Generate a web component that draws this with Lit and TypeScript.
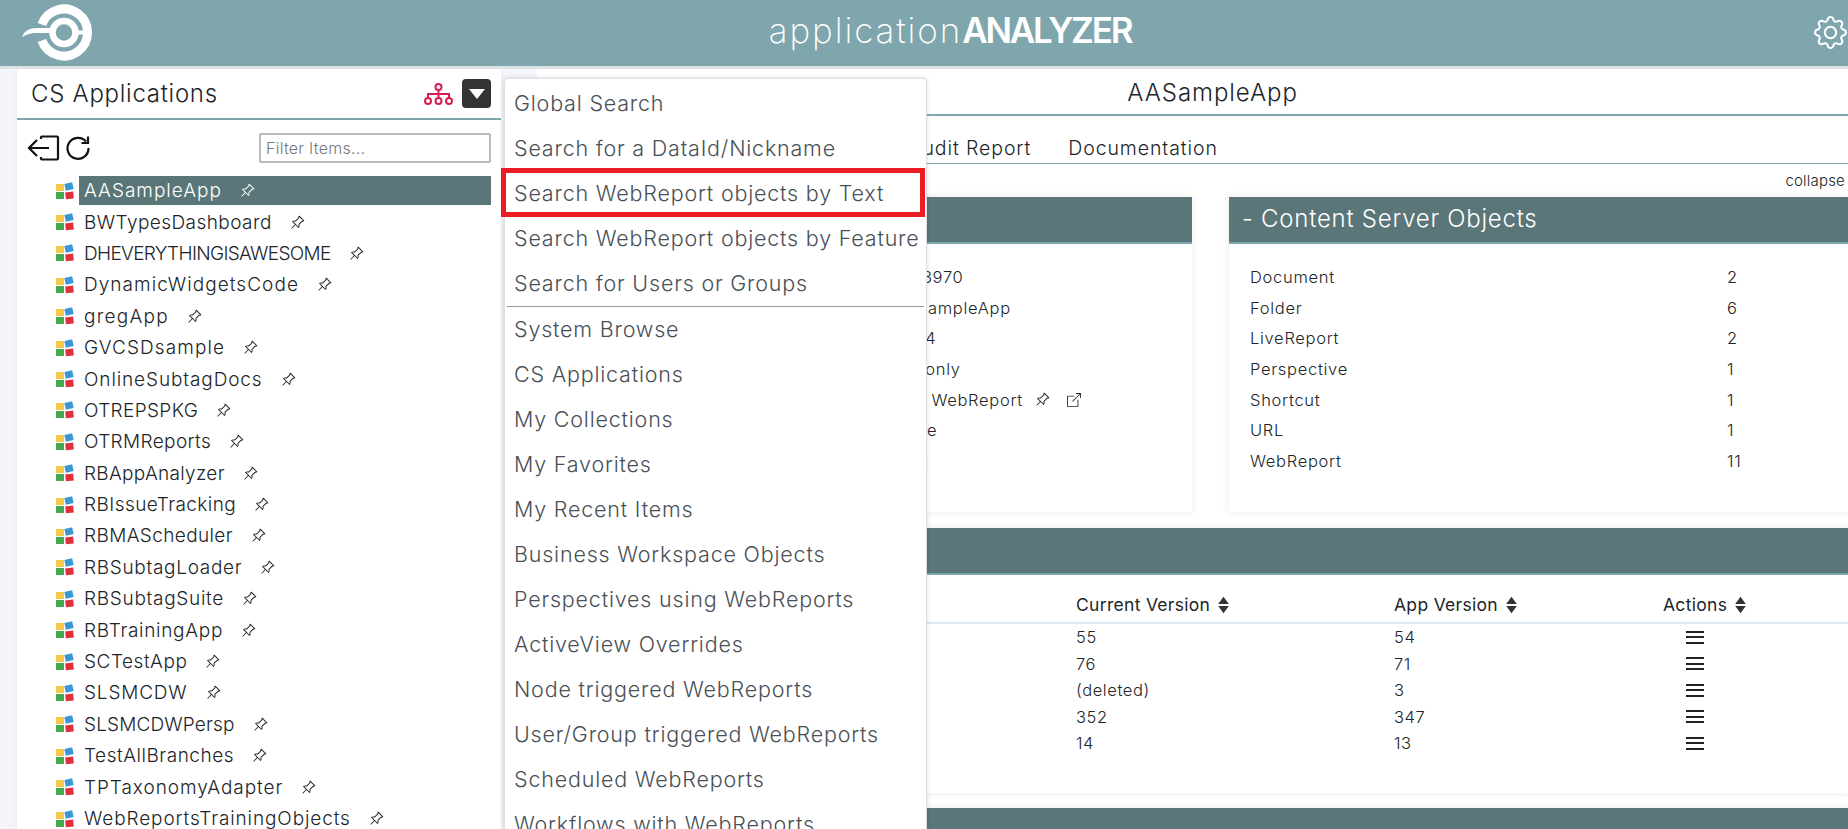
import { LitElement, html, css, svg } from "lit";
import { customElement } from "lit/decorators.js";

const PIN = svg`<path d="M9.828.722a.5.5 0 0 1 .354.146l4.95 4.95a.5.5 0 0 1 0 .707c-.48.48-1.072.588-1.503.588-.177 0-.335-.018-.46-.039l-3.134 3.134a5.927 5.927 0 0 1 .16 1.013c.046.702-.032 1.687-.72 2.375a.5.5 0 0 1-.707 0l-2.829-2.828-3.182 3.182c-.195.195-1.219.902-1.414.707-.195-.195.512-1.22.707-1.414l3.182-3.182-2.828-2.829a.5.5 0 0 1 0-.707c.688-.688 1.673-.767 2.375-.72a5.922 5.922 0 0 1 1.013.16l3.134-3.133a2.772 2.772 0 0 1-.04-.461c0-.43.108-1.022.589-1.503a.5.5 0 0 1 .353-.146zm.122 2.112v-.002.002zm0-.002v.002a.5.5 0 0 1-.122.51L6.293 6.878a.5.5 0 0 1-.511.12H5.78l-.014-.004a4.507 4.507 0 0 0-.288-.076 4.922 4.922 0 0 0-.765-.116c-.422-.028-.836.008-1.175.15l5.51 5.509c.141-.34.177-.753.149-1.175a4.924 4.924 0 0 0-.192-1.054l-.004-.013v-.001a.5.5 0 0 1 .12-.512l3.536-3.535a.5.5 0 0 1 .532-.115l.096.022c.087.017.208.034.344.034.114 0 .23-.011.343-.04L9.927 2.028c-.029.113-.04.23-.04.343a1.779 1.779 0 0 0 .062.46z"/>`;

const pin = () => html`<svg class="pin" viewBox="0 0 16 16" fill="currentColor">${PIN}</svg>`;

const tiles = () => html`<svg class="tiles" viewBox="0 0 18 18">
  <rect x="0" y="2" width="8" height="7" fill="#f6c94a"/>
  <rect x="9" y="1" width="8" height="7" fill="#3b97d3" transform="rotate(-12 13 4.5)"/>
  <rect x="0" y="10" width="8" height="7" fill="#46a84f"/>
  <rect x="9.5" y="10" width="8" height="7" fill="#e0303c" transform="rotate(-6 13 13.5)"/>
</svg>`;

const sortIcon = () => html`<svg class="sort" viewBox="0 0 10 16" fill="currentColor"><path d="M5 .5 9.8 7H.2zM5 15.500.2 9h9.600z"/></svg>`;

// label and the letter spacing that brings its width to the reference's
const TREE: [string, number][] = [
  ["AASampleApp", 1.0], ["BWTypesDashboard", 0.44], ["DHEVERYTHINGISAWESOME", -0.67], ["DynamicWidgetsCode", 1.05],
  ["gregApp", 1.27], ["GVCSDsample", 1.1], ["OnlineSubtagDocs", 0.89], ["OTREPSPKG", 0.37], ["OTRMReports", 0.38],
  ["RBAppAnalyzer", 0.31], ["RBIssueTracking", 0.43], ["RBMAScheduler", 0.38], ["RBSubtagLoader", 0.69],
  ["RBSubtagSuite", 0.7], ["RBTrainingApp", 0.7], ["SCTestApp", 0.53], ["SLSMCDW", 0.83], ["SLSMCDWPersp", 0.16],
  ["TestAllBranches", 0.53], ["TPTaxonomyAdapter", 0.93], ["WebReportsTrainingObjects", 0.89],
];

const MENU_A = ["Global Search", "Search for a DataId/Nickname", "Search WebReport objects by Text", "Search WebReport objects by Feature", "Search for Users or Groups"];
const MENU_B = ["System Browse", "CS Applications", "My Collections", "My Favorites", "My Recent Items", "Business Workspace Objects", "Perspectives using WebReports", "ActiveView Overrides", "Node triggered WebReports", "User/Group triggered WebReports", "Scheduled WebReports", "Workflows with WebReports"];

const OBJECTS: [string, number][] = [["Document", 2], ["Folder", 6], ["LiveReport", 2], ["Perspective", 1], ["Shortcut", 1], ["URL", 1], ["WebReport", 11]];

const VERSIONS: [string, string, string][] = [["Item A", "55", "54"], ["Item B", "76", "71"], ["Item C", "(deleted)", "3"], ["Item D", "352", "347"], ["Item E", "14", "13"]];

@customElement("app-root")
export class AppRoot extends LitElement {
  static styles = css`
    :host {
      display: block; position: relative; width: 1848px; height: 829px; overflow: hidden;
      background: #f3f5f8; color: #212529;
      font-family: Inter, "Noto Sans", sans-serif; font-weight: 300;
    }
    * { box-sizing: border-box; }
    .top {
      height: 66px; background: #80a6ad; display: flex; align-items: center; justify-content: center;
      position: relative; color: #fff; box-shadow: 0 3px 0 #dfe2e5; padding-left: 52px;
    }
    .brand { font-size: 35px; font-weight: 200; letter-spacing: 1.9px; margin-top: -6px; }
    .brand b { font-weight: 600; letter-spacing: -2.2px; }
    .logo { position: absolute; left: 20px; top: 3px; width: 74px; height: 60px; }
    .gear { position: absolute; left: 1814px; top: 16px; width: 33px; height: 33px; }
    .body { display: flex; height: 763px; padding-top: 3px; }
    .side {
      width: 484px; margin-left: 17px; background: #fff; height: 760px; flex: none;
      box-shadow: 0 0 6px rgba(0,0,0,.06);
    }
    .side-head {
      height: 51px; border-bottom: 2px solid #80a6ad; display: flex; align-items: center;
      padding: 0 10px 0 14px; gap: 9px;
    }
    .side-head h2 { flex: 1; margin: 0; font-size: 24px; font-weight: 300; letter-spacing: .72px; }
    .org { width: 29px; height: 22px; color: #d81e50; }
    .drop { width: 29px; height: 29px; border-radius: 4px; background: #333; display: flex; align-items: center; justify-content: center; }
    .drop i { width: 0; height: 0; border-left: 8px solid transparent; border-right: 8px solid transparent; border-top: 10px solid #fff; }
    .tools { display: flex; align-items: center; padding: 12px 10px 0 10px; height: 44px; }
    .tools svg { height: 26px; }
    .back { width: 33px; }
    .refresh { width: 24px; margin-left: 6px; }
    .filter {
      margin-left: auto; width: 232px; height: 30px; border: 2px solid #bbb; border-radius: 2px;
      font: 300 16px Inter, sans-serif; padding: 0 5px; color: #333; background: #fff; letter-spacing: .25px;
    }
    .filter::placeholder { color: #777; }
    .tree { list-style: none; margin: 11px 10px 0 39px; padding: 0; }
    .tree li { height: 31.4px; display: flex; align-items: center; font-size: 19px; }
    .tiles { width: 18px; height: 18px; flex: none; }
    .node { display: flex; align-items: center; flex: 1; height: 29px; margin-left: 5px; padding-left: 5px; gap: 18px; }
    .node.on { background: #5a7678; color: #fff; }
    .pin { width: 15px; height: 15px; flex: none; }
    .main { flex: 1; margin-left: 36px; background: #fff; min-width: 0; }
    .main-title { height: 47px; border-bottom: 2px solid #80a6ad; text-align: center; font-size: 24px; line-height: 47px; letter-spacing: .95px; padding-left: 40px; }
    .tabs { height: 48px; border-bottom: 1px solid #80a6ad; display: flex; align-items: flex-end; gap: 37px; padding: 0 0 0 88px; font-size: 19.500px; line-height: 30px; letter-spacing: .9px; }
    .collapse { height: 33px; text-align: right; font-size: 15px; line-height: 33px; padding-right: 3px; letter-spacing: .2px; }
    .cards { display: grid; grid-template-columns: 645px 1fr; gap: 37px; padding-left: 10px; }
    .card { background: #fff; box-shadow: 0 0 8px rgba(0,0,0,.09); height: 315px; }
    .bar { height: 47px; background: #5a7678; border-bottom: 2px solid #80a6ad; color: #fff; font-size: 24px; line-height: 44px; padding-left: 13px; letter-spacing: .75px; }
    .kv { display: grid; padding-top: 18px; font-size: 16.500px; }
    .kv > div { height: 30.6px; display: flex; align-items: center; letter-spacing: .7px; }
    .kv.objects { grid-template-columns: 477px 1fr; padding-left: 21px; }
    .kv.info { grid-template-columns: 346px 1fr; }
    .val { gap: 12px; }
    .ext { width: 14px; height: 14px; margin-left: 5px; }
    .section { margin: 16px 0 0 10px; height: 265px; background: #fff; box-shadow: 0 0 8px rgba(0,0,0,.09); }
    .grid { display: grid; grid-template-columns: 529px 318px 269px 1fr; font-size: 16.500px; }
    .grid > div { display: flex; align-items: center; height: 26.5px; letter-spacing: .6px; }
    .grid .h { height: 49px; border-bottom: 2px solid #dee6f0; padding-top: 12px; font-size: 17.500px; font-weight: 400; gap: 8px; letter-spacing: .3px; }
    .sort { width: 11px; height: 18px; color: #333; }
    .burger { width: 18px; height: 13px; margin-left: 23px; border-top: 2px solid #222; border-bottom: 2px solid #222; position: relative; }
    .burger::after { content: ""; position: absolute; left: 0; right: 0; top: 3.5px; height: 2px; background: #222; }
    .section.next { margin-top: 15px; }
    .menu {
      position: absolute; left: 504px; top: 78px; width: 423px; height: 800px; background: #fff; padding-top: 2px;
      border: 1px solid #dcdfe3; border-radius: 4px; box-shadow: 0 0 4px rgba(0,0,0,.15);
      font-size: 21.500px; color: #495057; font-weight: 300; letter-spacing: .8px;
    }
    .menu div.item { height: 45px; line-height: 45px; padding-left: 9px; white-space: nowrap; position: relative; }
    .menu hr { margin: 0 2px; border: 0; border-top: 1px solid #999; height: 1px; }
    .marked::after { content: ""; box-sizing: border-box; position: absolute; left: -4px; top: -3px; width: 424px; height: 49px; border: 5px solid #ed1c24; }
  `;

  render() {
    return html`
      <header class="top">
        <svg class="logo" viewBox="0 0 74 60" fill="#fff">
          <circle cx="44" cy="29.500" r="11.500" fill="none" stroke="#fff" stroke-width="6.500"/>
          <path d="M21.900 21.500A23.500 23.500 0 1 1 21.900 37.500" fill="none" stroke="#fff" stroke-width="9"/>
          <path d="M2 34C4 28 10 25 17 25H33V30H17C10 30 6 32 2 34Z"/>
          <path d="M55 27.500h9v4h-9z"/>
        </svg>
        <div class="brand">application<b>ANALYZER</b></div>
        <svg class="gear" viewBox="0 0 16 16" fill="currentColor">
          <path d="M8 4.754a3.246 3.246 0 1 0 0 6.492 3.246 3.246 0 0 0 0-6.492zM5.754 8a2.246 2.246 0 1 1 4.492 0 2.246 2.246 0 0 1-4.492 0z"/>
          <path d="M9.796 1.343c-.527-1.79-3.065-1.79-3.592 0l-.094.319a.873.873 0 0 1-1.255.52l-.292-.16c-1.64-.892-3.433.902-2.54 2.541l.159.292a.873.873 0 0 1-.52 1.255l-.319.094c-1.79.527-1.79 3.065 0 3.592l.319.094a.873.873 0 0 1 .52 1.255l-.16.292c-.892 1.64.901 3.434 2.541 2.54l.292-.159a.873.873 0 0 1 1.255.52l.094.319c.527 1.79 3.065 1.79 3.592 0l.094-.319a.873.873 0 0 1 1.255-.52l.292.16c1.64.893 3.434-.902 2.54-2.541l-.159-.292a.873.873 0 0 1 .52-1.255l.319-.094c1.79-.527 1.79-3.065 0-3.592l-.319-.094a.873.873 0 0 1-.52-1.255l.16-.292c.893-1.64-.902-3.433-2.541-2.54l-.292.159a.873.873 0 0 1-1.255-.52l-.094-.319zm-2.633.283c.246-.835 1.428-.835 1.674 0l.094.319a1.873 1.873 0 0 0 2.693 1.115l.291-.16c.764-.415 1.6.42 1.184 1.185l-.159.292a1.873 1.873 0 0 0 1.116 2.692l.318.094c.835.246.835 1.428 0 1.674l-.319.094a1.873 1.873 0 0 0-1.115 2.693l.16.291c.415.764-.42 1.6-1.185 1.184l-.291-.159a1.873 1.873 0 0 0-2.693 1.116l-.094.318c-.246.835-1.428.835-1.674 0l-.094-.319a1.873 1.873 0 0 0-2.692-1.115l-.292.16c-.764.415-1.6-.42-1.184-1.185l.159-.291A1.873 1.873 0 0 0 1.945 8.93l-.319-.094c-.835-.246-.835-1.428 0-1.674l.319-.094A1.873 1.873 0 0 0 3.06 4.377l-.16-.292c-.415-.764.42-1.6 1.185-1.184l.292.159a1.873 1.873 0 0 0 2.692-1.115l.094-.319z"/>
        </svg>
      </header>
      <div class="body">
        <aside class="side">
          <div class="side-head">
            <h2>CS Applications</h2>
            <svg class="org" viewBox="0 0 29 22" fill="none" stroke="currentColor" stroke-width="2">
              <circle cx="14.500" cy="4" r="3"/><circle cx="4" cy="18" r="3"/><circle cx="14.500" cy="18" r="3"/><circle cx="25" cy="18" r="3"/>
              <path d="M14.500 7v8M4 15v-4h21v4"/>
            </svg>
            <div class="drop"><i></i></div>
          </div>
          <div class="tools">
            <svg class="back" viewBox="0 0 33 26" fill="none" stroke="#111" stroke-width="2.200">
              <path d="M14 4V2.500a1 1 0 0 1 1-1h15a1 1 0 0 1 1 1v21a1 1 0 0 1-1 1H15a1 1 0 0 1-1-1V22M22 13H2M10 5l-8 8 8 8"/>
            </svg>
            <svg class="refresh" viewBox="0 0 24 26" fill="none" stroke="#111" stroke-width="2.200">
              <path d="M20 6.500A10.500 10.500 0 1 0 22.500 13M22 1.500V8h-6.500"/>
            </svg>
            <input class="filter" placeholder="Filter Items..." />
          </div>
          <ul class="tree">
            ${TREE.map(([t, ls], i) => html`<li>${tiles()}<span class="node ${i === 0 ? "on" : ""}"><span style="letter-spacing:${ls}px">${t}</span>${pin()}</span></li>`)}
          </ul>
        </aside>
        <main class="main">
          <div class="main-title">AASampleApp</div>
          <nav class="tabs"><span>Details</span><span>Dependencies</span><span>Audit Report</span><span>Documentation</span></nav>
          <div class="collapse">collapse</div>
          <div class="cards">
            <section class="card">
              <div class="bar">- Application Info</div>
              <div class="kv info">
                <div>DataId</div><div>1023970</div>
                <div>Name</div><div>AASampleApp</div>
                <div>Version</div><div>2054</div>
                <div>Mode</div><div>Set only</div>
                <div>Source</div><div class="val">App WebReport ${pin()}<svg class="ext" viewBox="0 0 16 16" fill="currentColor"><path fill-rule="evenodd" d="M8.636 3.500a.5.5 0 0 0-.5-.5H1.500A1.500 1.500 0 0 0 0 4.500v10A1.500 1.500 0 0 0 1.500 16h10a1.500 1.500 0 0 0 1.500-1.500V7.864a.5.5 0 0 0-1 0V14.500a.5.5 0 0 1-.5.5h-10a.5.5 0 0 1-.5-.5v-10a.5.5 0 0 1 .5-.5h6.636a.5.5 0 0 0 .5-.5z"/><path fill-rule="evenodd" d="M16 .5a.5.5 0 0 0-.5-.5h-5a.5.5 0 0 0 0 1h3.793L6.146 9.146a.5.5 0 1 0 .708.708L15 1.707V5.500a.5.5 0 0 0 1 0v-5z"/></svg></div>
                <div>Active</div><div>None</div>
                <div>Type</div><div>Text</div>
              </div>
            </section>
            <section class="card">
              <div class="bar">- Content Server Objects</div>
              <div class="kv objects">
                ${OBJECTS.map(([k, v]) => html`<div>${k}</div><div>${v}</div>`)}
              </div>
            </section>
          </div>
          <section class="section">
            <div class="bar">- Changes</div>
            <div class="grid">
              <div class="h">Name</div>
              <div class="h">Current Version ${sortIcon()}</div>
              <div class="h">App Version ${sortIcon()}</div>
              <div class="h">Actions ${sortIcon()}</div>
              ${VERSIONS.map(([n, c, a]) => html`<div>${n}</div><div>${c}</div><div>${a}</div><div><span class="burger"></span></div>`)}
            </div>
          </section>
          <section class="section next"><div class="bar"></div></section>
        </main>
      </div>
      <nav class="menu">
        ${MENU_A.map((m) => html`<div class="item ${m.endsWith("by Text") ? "marked" : ""}">${m}</div>`)}
        <hr />
        ${MENU_B.map((m) => html`<div class="item">${m}</div>`)}
      </nav>
    `;
  }
}
